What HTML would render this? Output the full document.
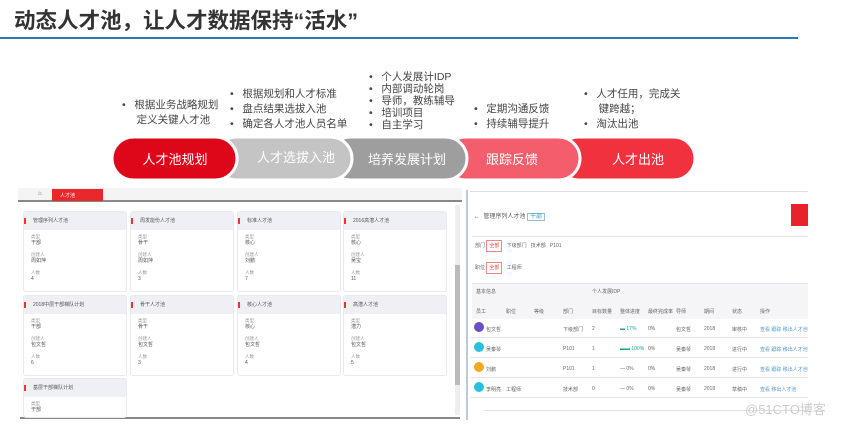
<!DOCTYPE html>
<html><head><meta charset="utf-8"><style>
*{margin:0;padding:0;box-sizing:border-box}
body{width:842px;height:425px;background:#fff;position:relative;overflow:hidden;font-family:"Liberation Sans","Noto Sans CJK SC",sans-serif;color:#333}
.a{position:absolute;white-space:nowrap}
.t{font-size:10.5px;line-height:15px;color:#444}
.card{position:absolute;width:104px;background:#fff;border:1px solid #e8e8ee;border-radius:3px}
.ch{height:18px;background:#eef0f5;font-size:5px;line-height:18px;padding-left:9px;color:#555;position:relative}
.ch:before{content:"";position:absolute;left:0;top:6px;width:2px;height:6px;background:#e33}
.cb{font-size:4.5px;line-height:7px;color:#999;padding:3px 7px}
.cb b{display:block;font-weight:normal;color:#555;font-size:5px;margin-bottom:4px}
.tr{position:absolute;left:470px;width:338px;height:20px;border-bottom:1px solid #e6e6e6;font-size:5px;color:#666;white-space:nowrap}
.tr span,.hd span{position:absolute;top:8px;white-space:nowrap}
.hd{position:absolute;left:470px;top:300px;width:338px;height:18px;font-size:5px;color:#666}
</style></head><body>
<div class="a" style="left:14px;top:4px;font-size:21.5px;font-weight:bold;color:#333">动态人才池，让人才数据保持“活水”</div>
<div class="a" style="left:0;top:37px;width:798px;height:2px;background:#2b78b5"></div>

<div class="a t" style="left:122px;top:98px">•&nbsp;&nbsp;&nbsp;根据业务战略规划<br>&nbsp;&nbsp;&nbsp;&nbsp;&nbsp;定义关键人才池</div>
<div class="a t" style="left:230px;top:87px">•&nbsp;&nbsp;&nbsp;根据规划和人才标准<br>•&nbsp;&nbsp;&nbsp;盘点结果选拔入池<br>•&nbsp;&nbsp;&nbsp;确定各人才池人员名单</div>
<div class="a t" style="left:369px;top:71px;line-height:12px">•&nbsp;&nbsp;&nbsp;个人发展计IDP<br>•&nbsp;&nbsp;&nbsp;内部调动轮岗<br>•&nbsp;&nbsp;&nbsp;导师，教练辅导<br>•&nbsp;&nbsp;&nbsp;培训项目<br>•&nbsp;&nbsp;&nbsp;自主学习</div>
<div class="a t" style="left:474px;top:102px">•&nbsp;&nbsp;&nbsp;定期沟通反馈<br>•&nbsp;&nbsp;&nbsp;持续辅导提升</div>
<div class="a t" style="left:584px;top:87px">•&nbsp;&nbsp;&nbsp;人才任用，完成关<br>&nbsp;&nbsp;&nbsp;&nbsp;&nbsp;键跨越；<br>•&nbsp;&nbsp;&nbsp;淘汰出池</div>

<svg class="a" style="left:0;top:0" width="842" height="200">
<g stroke="#fff" stroke-width="3">
<rect x="557" y="137" width="138" height="43" rx="21.5" fill="#f0323f"/>
<rect x="444" y="137" width="136" height="43" rx="21.5" fill="#f35d6c"/>
<rect x="329" y="137" width="138" height="43" rx="21.5" fill="#9e9e9e"/>
<rect x="215" y="137" width="137" height="43" rx="21.5" fill="#c4c4c4"/>
<rect x="112" y="137" width="125" height="43" rx="21.5" fill="#de0619"/>
</g>
<g fill="#fff" font-size="13" font-family="Liberation Sans,Noto Sans CJK SC,sans-serif" text-anchor="middle">
<text x="175" y="164">人才池规划</text><text x="296" y="162">人才选拔入池</text><text x="407" y="164">培养发展计划</text><text x="512" y="164">跟踪反馈</text><text x="638" y="164">人才出池</text>
</g></svg>

<!-- left screenshot -->
<div class="a" style="left:18px;top:188px;width:444px;height:14px;background:#f4f4f4;border-bottom:2px solid #888"></div>
<div class="a" style="left:52px;top:189px;width:51px;height:12px;background:#e8282a;font-size:5px;color:#fff;padding:3px 8px">人才池</div>
<div class="a" style="left:38px;top:191px;font-size:6px;color:#555">⌂</div>
<div class="a" style="left:455px;top:205px;width:5px;height:210px;background:#eee"></div>
<div class="a" style="left:455px;top:265px;width:5px;height:120px;background:#bbb"></div>
<div class="a" style="left:20px;top:417px;width:440px;height:2px;background:#888"></div>

<div class="card" style="left:23px;top:211px;height:81px"><div class="ch">管理序列人才池</div><div class="cb">类型<b>干部</b>创建人<b>周如萍</b>人数<b>4</b></div></div>
<div class="card" style="left:130px;top:211px;height:81px"><div class="ch">周发能份人才池</div><div class="cb">类型<b>骨干</b>创建人<b>周如萍</b>人数<b>3</b></div></div>
<div class="card" style="left:237px;top:211px;height:81px"><div class="ch">标准人才池</div><div class="cb">类型<b>核心</b>创建人<b>刘鹏</b>人数<b>7</b></div></div>
<div class="card" style="left:343px;top:211px;height:81px"><div class="ch">2016高潜人才池</div><div class="cb">类型<b>核心</b>创建人<b>吴宝</b>人数<b>11</b></div></div>
<div class="card" style="left:23px;top:295px;height:81px"><div class="ch">2018中层干部梯队计划</div><div class="cb">类型<b>干部</b>创建人<b>包文哲</b>人数<b>6</b></div></div>
<div class="card" style="left:130px;top:295px;height:81px"><div class="ch">骨干人才池</div><div class="cb">类型<b>骨干</b>创建人<b>包文哲</b>人数<b>3</b></div></div>
<div class="card" style="left:237px;top:295px;height:81px"><div class="ch">核心人才池</div><div class="cb">类型<b>核心</b>创建人<b>包文哲</b>人数<b>4</b></div></div>
<div class="card" style="left:343px;top:295px;height:81px"><div class="ch">高潜人才池</div><div class="cb">类型<b>潜力</b>创建人<b>包文哲</b>人数<b>5</b></div></div>
<div class="card" style="left:23px;top:378px;height:40px"><div class="ch">基层干部梯队计划</div><div class="cb">类型<b>干部</b></div></div>

<!-- right screenshot -->
<div class="a" style="left:466px;top:190px;width:2px;height:230px;background:#bcc8dc"></div>
<div class="a" style="left:470px;top:191px;width:338px;height:1px;background:#ddd"></div>
<div class="a" style="left:474px;top:211px;font-size:6px;color:#555">←&nbsp; 管理序列人才池 <span style="border:1px solid #9bc;color:#39c;padding:0 2px">干部</span></div>
<div class="a" style="left:791px;top:204px;width:17px;height:22px;background:#e8222a"></div>
<div class="a" style="left:472px;top:236px;width:336px;height:1px;background:#e6e6e6"></div>
<div class="a" style="left:475px;top:242px;font-size:5px;color:#666">部门 <span style="border:1px solid #e88;color:#e44;padding:2px">全部</span>&nbsp;&nbsp; 下级部门&nbsp;&nbsp; 技术部&nbsp;&nbsp; P101</div>
<div class="a" style="left:475px;top:264px;font-size:5px;color:#666">职位 <span style="border:1px solid #e88;color:#e44;padding:2px">全部</span>&nbsp;&nbsp; 工程师</div>
<div class="a" style="left:472px;top:283px;width:336px;height:36px;background:#f5f5f7;border-top:1px solid #e6e6e6"></div>
<div class="a" style="left:476px;top:288px;font-size:5px;color:#666">基本信息</div>
<div class="a" style="left:592px;top:288px;font-size:5px;color:#666">个人发展IDP</div>
<div class="hd"><span style="left:6px">员工</span><span style="left:36px">职位</span><span style="left:64px">等级</span><span style="left:93px">部门</span><span style="left:122px">目标数量</span><span style="left:150px">整体进度</span><span style="left:178px">最终完成率</span><span style="left:206px">导师</span><span style="left:234px">期间</span><span style="left:262px">状态</span><span style="left:290px">操作</span></div>
<div class="tr" style="top:318px"><span style="left:4px;width:10px;height:10px;top:4px;border-radius:50%;background:#6a4fc4"></span><span style="left:16px">包文哲</span><span style="left:93px">下级部门</span><span style="left:122px">2</span><span style="left:150px;color:#2a9">▬ 17%</span><span style="left:178px">0%</span><span style="left:206px">包文哲</span><span style="left:234px">2018</span><span style="left:262px">审核中</span><span style="left:290px;color:#59c">查看 跟踪 移出人才池</span></div>
<div class="tr" style="top:338px"><span style="left:4px;width:10px;height:10px;top:4px;border-radius:50%;background:#2bc0dc"></span><span style="left:16px">吴秦琴</span><span style="left:93px">P101</span><span style="left:122px">1</span><span style="left:150px;color:#1a8">▬▬ 100%</span><span style="left:178px">0%</span><span style="left:206px">吴秦琴</span><span style="left:234px">2018</span><span style="left:262px">进行中</span><span style="left:290px;color:#59c">查看 跟踪 移出人才池</span></div>
<div class="tr" style="top:358px"><span style="left:4px;width:10px;height:10px;top:4px;border-radius:50%;background:#f5a623"></span><span style="left:16px">刘鹏</span><span style="left:93px">P101</span><span style="left:122px">1</span><span style="left:150px">— 0%</span><span style="left:178px">0%</span><span style="left:206px">吴秦琴</span><span style="left:234px">2018</span><span style="left:262px">进行中</span><span style="left:290px;color:#59c">查看 跟踪 移出人才池</span></div>
<div class="tr" style="top:378px"><span style="left:4px;width:10px;height:10px;top:4px;border-radius:50%;background:#2bc0dc"></span><span style="left:16px">李明亮</span><span style="left:36px">工程师</span><span style="left:93px">技术部</span><span style="left:122px">0</span><span style="left:150px">— 0%</span><span style="left:178px">0%</span><span style="left:206px">吴秦琴</span><span style="left:234px">2018</span><span style="left:262px">草稿中</span><span style="left:290px;color:#59c">查看 移出人才池</span></div>
<div class="a" style="left:485px;top:410px;width:323px;height:1px;background:#ddd"></div>
<div class="a" style="left:745px;top:399px;font-size:13px;color:#ccc">@51CTO博客</div>
</body></html>
